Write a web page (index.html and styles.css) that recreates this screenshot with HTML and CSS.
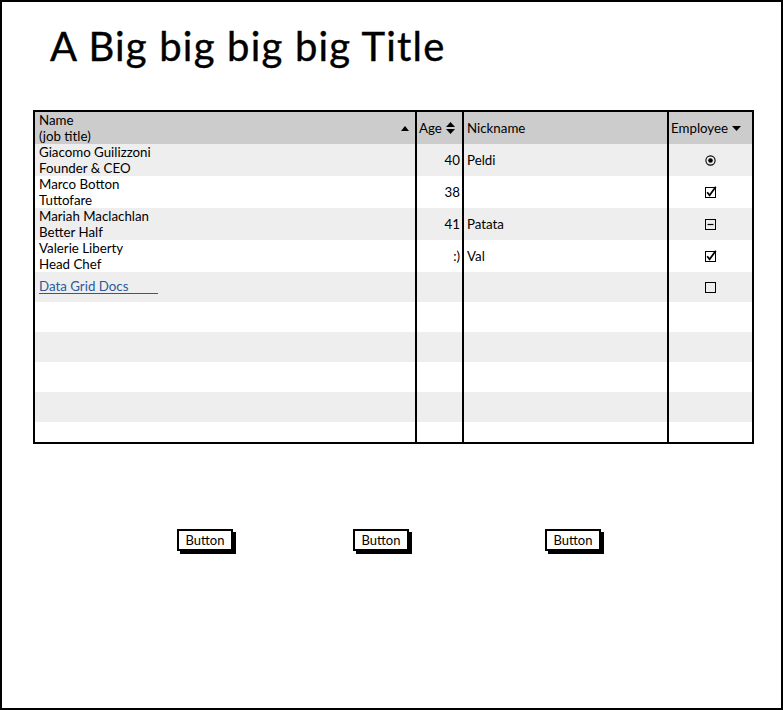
FILE: index.html
```html
<!DOCTYPE html>
<html>
<head>
<meta charset="utf-8">
<link rel="stylesheet" href="styles.css">
</head>
<body>
<div class="frame">
  <h1 class="title">A Big big big big Title</h1>
  <div class="grid">
    <div class="row head">
      <div class="cell c-name">
        <div class="two">Name<br>(job title)</div>
        <svg class="ico" width="8" height="5" viewBox="0 0 8 5"><polygon points="0,5 8,5 4,0" fill="#000"/></svg>
      </div>
      <div class="cell c-age-h">
        <span>Age</span>
        <svg class="ico" width="9" height="12" viewBox="0 0 9 12"><polygon points="0,5 9,5 4.5,0" fill="#000"/><polygon points="0,7 9,7 4.5,12" fill="#000"/></svg>
      </div>
      <div class="cell c-nick">Nickname</div>
      <div class="cell c-emp-h">
        <span>Employee</span>
        <svg class="ico" width="9" height="5" viewBox="0 0 9 5"><polygon points="0,0 9,0 4.5,5" fill="#000"/></svg>
      </div>
    </div>
    <div class="row alt">
      <div class="cell c-name"><div class="two">Giacomo Guilizzoni<br>Founder &amp; CEO</div></div>
      <div class="cell c-age">40</div>
      <div class="cell c-nick">Peldi</div>
      <div class="cell c-emp">
        <svg width="11" height="11" viewBox="0 0 11 11"><circle cx="5.5" cy="5.5" r="4.6" fill="none" stroke="#000" stroke-width="1.1"/><circle cx="5.5" cy="5.5" r="2.3" fill="#000"/></svg>
      </div>
    </div>
    <div class="row">
      <div class="cell c-name"><div class="two">Marco Botton<br>Tuttofare</div></div>
      <div class="cell c-age">38</div>
      <div class="cell c-nick"></div>
      <div class="cell c-emp">
        <svg width="12" height="12" viewBox="0 0 12 12"><rect x="0.5" y="1.5" width="10" height="10" fill="none" stroke="#000" stroke-width="1"/><path d="M2.2 6.2 L4.6 9.3 L10.8 0.8" fill="none" stroke="#000" stroke-width="1.8"/></svg>
      </div>
    </div>
    <div class="row alt">
      <div class="cell c-name"><div class="two">Mariah Maclachlan<br>Better Half</div></div>
      <div class="cell c-age">41</div>
      <div class="cell c-nick">Patata</div>
      <div class="cell c-emp">
        <svg width="12" height="12" viewBox="0 0 12 12"><rect x="0.5" y="1.5" width="10" height="10" fill="none" stroke="#000" stroke-width="1"/><path d="M2.5 6.5 H8.5" stroke="#000" stroke-width="1.2"/></svg>
      </div>
    </div>
    <div class="row">
      <div class="cell c-name"><div class="two">Valerie Liberty<br>Head Chef</div></div>
      <div class="cell c-age">:)</div>
      <div class="cell c-nick">Val</div>
      <div class="cell c-emp">
        <svg width="12" height="12" viewBox="0 0 12 12"><rect x="0.5" y="1.5" width="10" height="10" fill="none" stroke="#000" stroke-width="1"/><path d="M2.2 6.2 L4.6 9.3 L10.8 0.8" fill="none" stroke="#000" stroke-width="1.8"/></svg>
      </div>
    </div>
    <div class="row alt short">
      <div class="cell c-name"><a class="link" href="#">Data Grid Docs</a></div>
      <div class="cell c-age"></div>
      <div class="cell c-nick"></div>
      <div class="cell c-emp">
        <svg width="12" height="12" viewBox="0 0 12 12"><rect x="0.5" y="1.5" width="10" height="10" fill="none" stroke="#000" stroke-width="1"/></svg>
      </div>
    </div>
    <div class="row short"><div class="cell c-name"></div><div class="cell c-age"></div><div class="cell c-nick"></div><div class="cell c-emp"></div></div>
    <div class="row alt short"><div class="cell c-name"></div><div class="cell c-age"></div><div class="cell c-nick"></div><div class="cell c-emp"></div></div>
    <div class="row short"><div class="cell c-name"></div><div class="cell c-age"></div><div class="cell c-nick"></div><div class="cell c-emp"></div></div>
    <div class="row alt short"><div class="cell c-name"></div><div class="cell c-age"></div><div class="cell c-nick"></div><div class="cell c-emp"></div></div>
    <div class="row last"><div class="cell c-name"></div><div class="cell c-age"></div><div class="cell c-nick"></div><div class="cell c-emp"></div></div>
  </div>
  <div class="buttons">
    <div class="btn b1">Button</div>
    <div class="btn b2">Button</div>
    <div class="btn b3">Button</div>
  </div>
</div>
</body>
</html>
```
FILE: styles.css
```css
html, body {
  margin: 0;
  padding: 0;
  background: #fff;
}
body {
  font-family: Lato, "Open Sans", sans-serif;
  color: #000;
}
.frame {
  width: 783px;
  height: 710px;
  box-sizing: border-box;
  border: 2px solid #000;
  padding-left: 31px;
  overflow: hidden;
}
.title {
  margin: 20px 0 0 17px;
  font-size: 40px;
  line-height: 48px;
  font-weight: 400;
  letter-spacing: 1.2px;
  -webkit-text-stroke: 0.4px #000;
}
.grid {
  margin-top: 40px;
  width: 717px;
  border: 2px solid #000;
  font-size: 13.3px;
  line-height: 16px;
}
.row {
  display: flex;
  height: 32px;
  background: #fff;
}
.row.alt { background: #eeeeee; }
.row.head { background: #cccccc; }
.row.short { height: 30px; }
.row.last { height: 20px; }
.cell {
  box-sizing: border-box;
  display: flex;
  align-items: center;
  height: 100%;
}
.c-name {
  width: 380px;
  padding-left: 4px;
  justify-content: space-between;
  padding-right: 6px;
}
.head .c-name .two { margin-top: -1px; }
.c-age, .c-age-h {
  width: 47px;
  border-left: 2px solid #000;
}
.c-age {
  justify-content: flex-end;
  padding-right: 2px;
}
.c-age-h {
  padding-left: 2px;
  gap: 4px;
}
.c-nick {
  width: 205px;
  border-left: 2px solid #000;
  padding-left: 3px;
}
.c-emp, .c-emp-h {
  width: 85px;
  border-left: 2px solid #000;
}
.c-emp {
  justify-content: center;
}
.c-emp-h {
  padding-left: 2px;
  gap: 4px;
}
.ico { flex: none; }
.link {
  display: inline-block;
  width: 119px;
  color: #2b5a9c;
  text-decoration: none;
  border-bottom: 1px solid #2b5a9c;
  line-height: 14px;
  margin-top: -2px;
}
.buttons {
  display: flex;
  margin-top: 85px;
}
.btn {
  box-sizing: border-box;
  width: 56px;
  height: 22px;
  border: 2px solid #000;
  box-shadow: 3px 3px 0 #000;
  background: #fff;
  font-size: 13px;
  line-height: 18px;
  text-align: center;
}
.b1 { margin-left: 144px; }
.b2 { margin-left: 120px; }
.b3 { margin-left: 136px; }
```
